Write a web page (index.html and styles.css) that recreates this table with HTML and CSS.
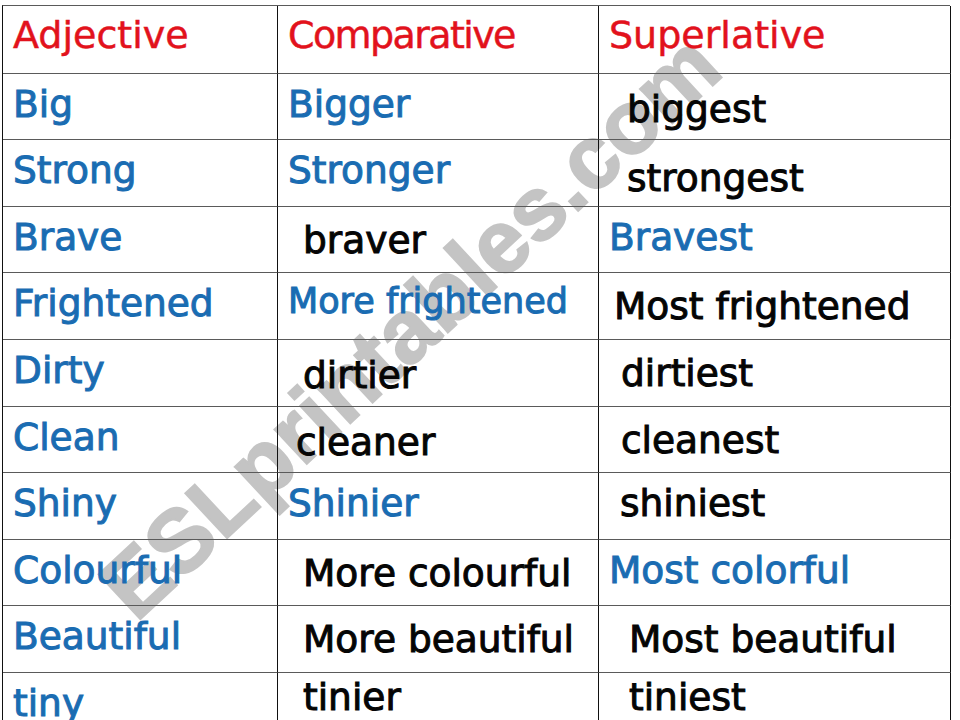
FILE: index.html
```html
<!DOCTYPE html>
<html lang="en">
<head>
<meta charset="utf-8">
<title>Adjectives</title>
<link rel="stylesheet" href="styles.css">
</head>
<body>
<div class="page">
  <div class="watermark">ESLprintables.com</div>
  <div class="sheet">
    <div class="cell head">Adjective</div>
    <div class="cell head tight">Comparative</div>
    <div class="cell head">Superlative</div>

    <div class="cell blue">Big</div>
    <div class="cell blue">Bigger</div>
    <div class="cell black in28 low2">biggest</div>

    <div class="cell blue">Strong</div>
    <div class="cell blue">Stronger</div>
    <div class="cell black in28 low3">strongest</div>

    <div class="cell blue">Brave</div>
    <div class="cell black in25 low1">braver</div>
    <div class="cell blue">Bravest</div>

    <div class="cell blue">Frightened</div>
    <div class="cell blue small">More frightened</div>
    <div class="cell black in15 low1">Most frightened</div>

    <div class="cell blue">Dirty</div>
    <div class="cell black in25 low2">dirtier</div>
    <div class="cell black in22 low1">dirtiest</div>

    <div class="cell blue">Clean</div>
    <div class="cell black in18 low2">cleaner</div>
    <div class="cell black in22 low1">cleanest</div>

    <div class="cell blue">Shiny</div>
    <div class="cell blue">Shinier</div>
    <div class="cell black in21">shiniest</div>

    <div class="cell blue">Colourful</div>
    <div class="cell black in25 low1">More colourful</div>
    <div class="cell blue">Most colorful</div>

    <div class="cell blue">Beautiful</div>
    <div class="cell black in25 low1">More beautiful</div>
    <div class="cell black in30 low1">Most beautiful</div>

    <div class="cell blue">tiny</div>
    <div class="cell black in25 up">tinier</div>
    <div class="cell black in30 up">tiniest</div>
  </div>
</div>
</body>
</html>
```

FILE: styles.css
```css
* {
  box-sizing: border-box;
}

html, body {
  margin: 0;
  padding: 0;
  background: #ffffff;
}

body {
  width: 960px;
  height: 720px;
  overflow: hidden;
  font-family: "DejaVu Sans", "Liberation Sans", sans-serif;
}

.page {
  position: relative;
  width: 960px;
  height: 720px;
  padding: 5px 0 0 2px;
}

.watermark {
  position: absolute;
  left: 410px;
  top: 326px;
  transform: translate(-50%, -50%) rotate(-43deg);
  white-space: nowrap;
  font-family: "Liberation Sans", "DejaVu Sans", sans-serif;
  font-weight: bold;
  font-size: 89px;
  line-height: 1;
  color: #c4c4c4;
  -webkit-text-stroke: 2px #c4c4c4;
  z-index: 0;
}

.sheet {
  position: relative;
  z-index: 1;
  display: grid;
  grid-template-columns: 275px 321px 352px;
  grid-template-rows: 68px 66px 67px 66px 67px 67px 66px 67px 66px 67px 67px;
  width: 948px;
  border-top: 1px solid #5a5a5a;
  border-left: 1px solid #111111;
}

.cell {
  border-right: 1px solid #111111;
  border-bottom: 1px solid #5a5a5a;
  padding: 11px 0 0 10px;
  font-size: 37.5px;
  line-height: 38px;
  white-space: nowrap;
  overflow: visible;
  -webkit-text-stroke: 1px currentColor;
}

.head {
  color: #e2121c;
  font-size: 38px;
  padding-top: 10px;
  -webkit-text-stroke: 0.5px currentColor;
}

.tight {
  letter-spacing: -1.6px;
}

.blue {
  color: #1a6cb2;
}

.black {
  color: #050505;
}

.small {
  font-size: 35px;
  padding-top: 9px;
}

.in15 { padding-left: 15px; }
.in18 { padding-left: 18px; }
.in21 { padding-left: 21px; }
.in22 { padding-left: 22px; }
.in25 { padding-left: 25px; }
.in28 { padding-left: 28px; }
.in30 { padding-left: 30px; }

.low1 { padding-top: 14px; }
.low2 { padding-top: 16px; }
.low3 { padding-top: 19px; }
.up { padding-top: 5px; }
```
